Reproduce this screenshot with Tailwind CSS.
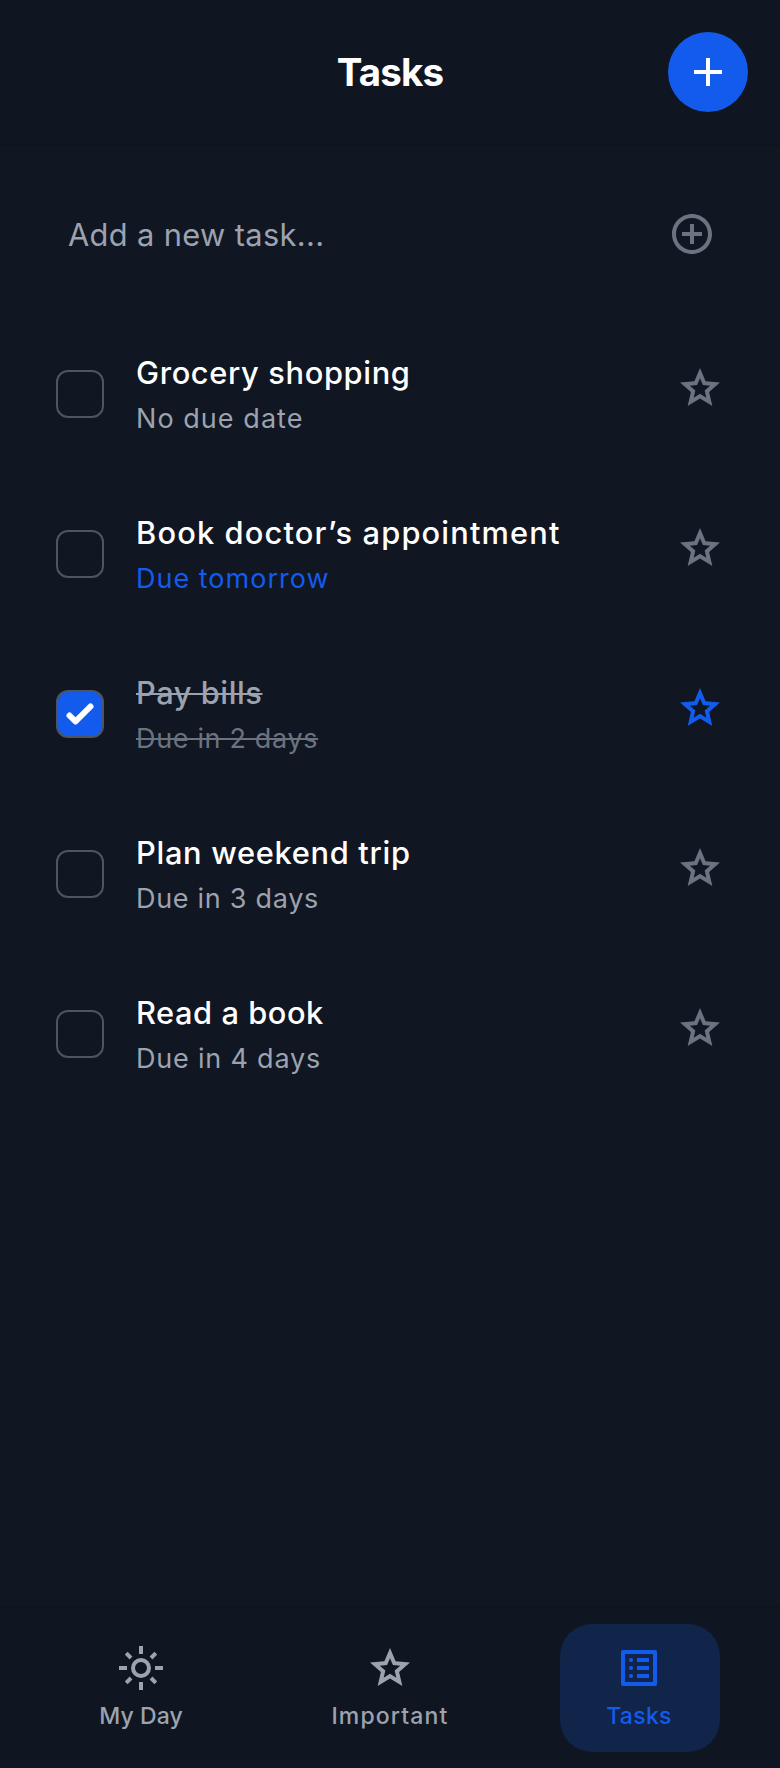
<!DOCTYPE html>
<html lang="en">
<head>
<meta charset="utf-8">
<title>Tasks</title>
<script src="https://cdn.jsdelivr.net/npm/@tailwindcss/browser@4"></script>
</head>
<body class="bg-[#101622]">
<svg class="hidden">
  <symbol id="star" viewBox="0 -960 960 960"><path d="m354-287 126-76 126 77-33-144 111-96-146-13-58-136-58 135-146 13 111 97-33 143ZM233-120l65-281L80-590l288-25 112-265 112 265 288 25-218 189 65 281-247-149L233-120Zm247-350Z"/></symbol>
</svg>
<div class="flex h-[1768px] w-[780px] flex-col bg-[#101622] font-['Inter',sans-serif] text-white">
  <header class="flex h-[146px] items-center border-b-2 border-[#0d141e] bg-[#0f1621] px-8">
    <div class="w-20"></div>
    <h1 class="flex-1 text-center text-[38.5px] leading-[50px] font-bold tracking-[-0.8px]">Tasks</h1>
    <button class="flex size-20 items-center justify-center rounded-full bg-[#135bec]">
      <svg class="size-12" viewBox="0 0 24 24" fill="currentColor"><path d="M19 13h-6v6h-2v-6H5v-2h6V5h2v6h6v2z"/></svg>
    </button>
  </header>

  <main class="flex-1">
    <div class="flex h-[168px] items-center justify-between pt-2 pr-16 pl-[68px]">
      <span class="pt-0.5 text-[30.8px] leading-[48px] tracking-[0.36px] text-[#9ca3af]">Add a new task...</span>
      <svg class="size-12 text-[#6b7280]" viewBox="0 0 24 24" fill="currentColor"><path d="M13 7h-2v4H7v2h4v4h2v-4h4v-2h-4V7zm-1-5C6.48 2 2 6.48 2 12s4.48 10 10 10 10-4.48 10-10S17.52 2 12 2zm0 18c-4.41 0-8-3.59-8-8s3.59-8 8-8 8 3.59 8 8-3.59 8-8 8z"/></svg>
    </div>

    <ul>
      <li class="flex h-40 items-center pr-14 pl-14">
        <span class="size-12 rounded-xl border-2 border-[#4b5563]"></span>
        <div class="ml-8 flex-1 whitespace-nowrap">
          <p class="text-[30.8px] leading-[46px] font-medium tracking-[0.64px]">Grocery shopping</p>
          <p class="mt-[3px] -mb-px text-[27px] leading-10 tracking-[1.05px] text-[#9ca3af]">No due date</p>
        </div>
        <svg class="mb-3 size-12 text-[#6b7280]" fill="currentColor"><use href="#star"/></svg>
      </li>
      <li class="flex h-40 items-center pr-14 pl-14">
        <span class="size-12 rounded-xl border-2 border-[#4b5563]"></span>
        <div class="ml-8 flex-1 whitespace-nowrap">
          <p class="text-[30.8px] leading-[46px] font-medium tracking-[1.15px]">Book doctor’s appointment</p>
          <p class="mt-[3px] -mb-px text-[27px] leading-10 tracking-[1px] text-[#135bec]">Due tomorrow</p>
        </div>
        <svg class="mb-3 size-12 text-[#6b7280]" fill="currentColor"><use href="#star"/></svg>
      </li>
      <li class="flex h-40 items-center pr-14 pl-14">
        <span class="flex size-12 items-center justify-center rounded-xl border-2 border-[#4b5563] bg-[#135bec]">
          <svg class="size-12 shrink-0" viewBox="0 0 16 16" fill="white"><path d="M12.207 4.793a1 1 0 010 1.414l-5 5a1 1 0 01-1.414 0l-2-2a1 1 0 011.414-1.414L6.5 9.086l4.293-4.293a1 1 0 011.414 0z"/></svg>
        </span>
        <div class="ml-8 flex-1 whitespace-nowrap">
          <p class="text-[30.8px] leading-[46px] font-medium tracking-[0.55px] text-[#9ca3af] line-through decoration-2">Pay bills</p>
          <p class="mt-[3px] -mb-px text-[27px] leading-10 tracking-[0.65px] text-[#6b7280] line-through decoration-2">Due in 2 days</p>
        </div>
        <svg class="mb-3 size-12 text-[#135bec]" fill="currentColor"><use href="#star"/></svg>
      </li>
      <li class="flex h-40 items-center pr-14 pl-14">
        <span class="size-12 rounded-xl border-2 border-[#4b5563]"></span>
        <div class="ml-8 flex-1 whitespace-nowrap">
          <p class="text-[30.8px] leading-[46px] font-medium tracking-[0.69px]">Plan weekend trip</p>
          <p class="mt-[3px] -mb-px text-[27px] leading-10 tracking-[0.7px] text-[#9ca3af]">Due in 3 days</p>
        </div>
        <svg class="mb-3 size-12 text-[#6b7280]" fill="currentColor"><use href="#star"/></svg>
      </li>
      <li class="flex h-40 items-center pr-14 pl-14">
        <span class="size-12 rounded-xl border-2 border-[#4b5563]"></span>
        <div class="ml-8 flex-1 whitespace-nowrap">
          <p class="text-[30.8px] leading-[46px] font-medium tracking-[0.55px]">Read a book</p>
          <p class="mt-[3px] -mb-px text-[27px] leading-10 tracking-[0.8px] text-[#9ca3af]">Due in 4 days</p>
        </div>
        <svg class="mb-3 size-12 text-[#6b7280]" fill="currentColor"><use href="#star"/></svg>
      </li>
    </ul>
  </main>

  <nav class="flex h-[162px] items-start justify-between border-t-2 border-[#0d141e] bg-[#0f1621] pt-4 pr-[60px] pl-[61px] text-[#9ca3af]">
    <a class="flex w-40 flex-col items-center py-5">
      <svg class="size-12" viewBox="0 0 24 24" fill="none" stroke="currentColor" stroke-width="2"><circle cx="12" cy="12" r="4"/><path d="M12 1v4M12 19v4M1 12h4M19 12h4M4.6 4.6l2.4 2.4M17 17l2.4 2.4M4.6 19.4L7 17M17 7l2.4-2.4"/></svg>
      <span class="mt-2 text-[23px] leading-8 font-medium tracking-[0.1px]">My Day</span>
    </a>
    <a class="flex w-40 flex-col items-center py-5 pr-[1px]">
      <svg class="size-12" fill="currentColor"><use href="#star"/></svg>
      <span class="mt-2 text-[23px] leading-8 font-medium tracking-[1.15px]">Important</span>
    </a>
    <a class="flex w-40 flex-col items-center rounded-[32px] bg-[#112449] py-5 pr-0.5 text-[#135bec]">
      <svg class="size-12" viewBox="0 0 24 24" fill="currentColor"><path fill-rule="evenodd" d="M4 3h16a1 1 0 0 1 1 1v16a1 1 0 0 1-1 1H4a1 1 0 0 1-1-1V4a1 1 0 0 1 1-1zM5 5v14h14V5z"/><path d="M11 7h6v2h-6zM11 11h6v2h-6zM11 15h6v2h-6z"/><circle cx="8" cy="8" r="1"/><circle cx="8" cy="12" r="1"/><circle cx="8" cy="16" r="1"/></svg>
      <span class="mt-2 text-[23px] leading-8 font-medium tracking-[0.3px]">Tasks</span>
    </a>
  </nav>
</div>
</body>
</html>
